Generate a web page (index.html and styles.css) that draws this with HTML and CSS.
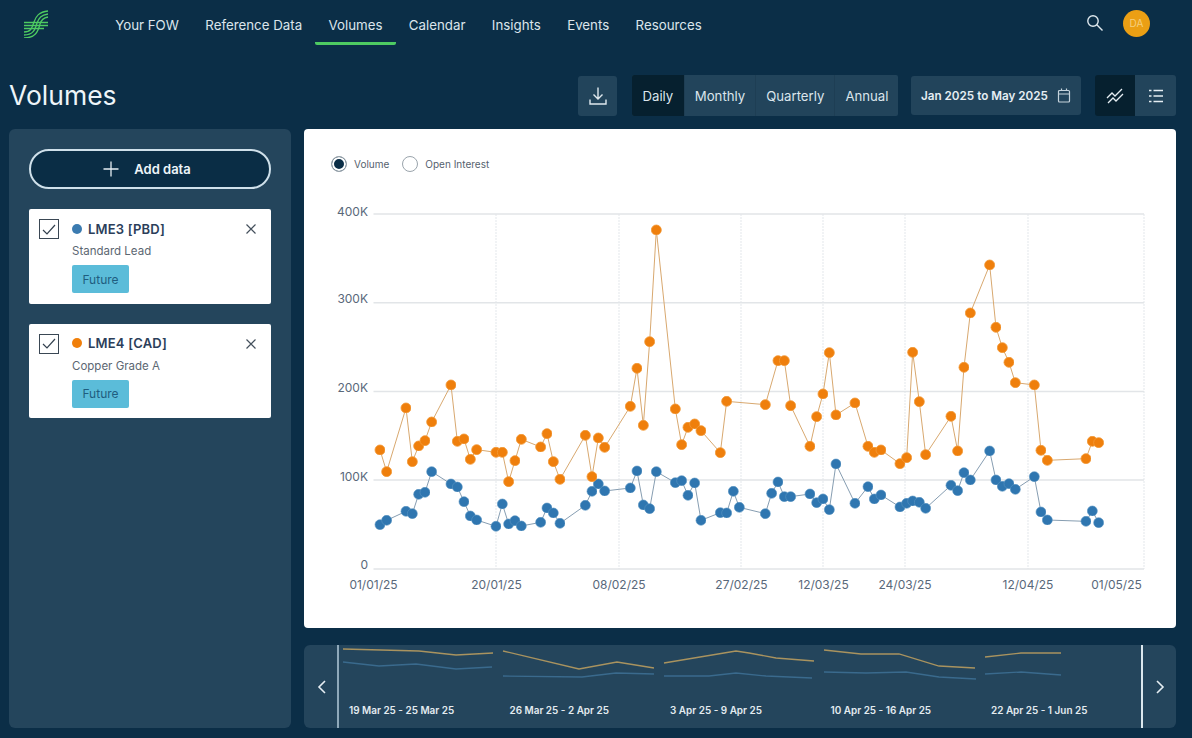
FILE: index.html
```html
<!DOCTYPE html>
<html lang="en">
<head>
<meta charset="utf-8">
<title>Volumes</title>
<link rel="stylesheet" href="styles.css">
</head>
<body>
<header class="topbar">
  <a class="logo" href="#" aria-label="FOW">
    <svg width="26" height="28" viewBox="0 0 26 28" fill="none" stroke="#4ecb62" stroke-width="1.3">
      <path d="M1 12.5H25M1 15.5H25M1 18.5H21"/>
      <path d="M1 22C8 22 9 18 11 12C13 6 16 2 25 1"/>
      <path d="M1 25C10 25 12 20 14 13C16 8 18 5 25 4"/>
      <path d="M1 28C12 28 15 22 17 14C18 10 20 8 25 7"/>
    </svg>
  </a>
  <nav class="nav">
    <a class="nav-item" href="#">Your FOW</a>
    <a class="nav-item" href="#">Reference Data</a>
    <a class="nav-item is-active" href="#">Volumes</a>
    <a class="nav-item" href="#">Calendar</a>
    <a class="nav-item" href="#">Insights</a>
    <a class="nav-item" href="#">Events</a>
    <a class="nav-item" href="#">Resources</a>
  </nav>
  <div class="top-actions">
    <svg class="search" width="18" height="18" viewBox="0 0 18 18" fill="none" stroke="#dfe8ee" stroke-width="1.4">
      <circle cx="7" cy="7" r="5.2"/><path d="M10.8 10.8L16.5 16.5"/>
    </svg>
    <span class="avatar">DA</span>
  </div>
</header>

<section class="toolbar">
  <h1 class="page-title">Volumes</h1>
  <div class="tools">
    <button class="icon-btn download" aria-label="Download">
      <svg width="20" height="20" viewBox="0 0 20 20" fill="none" stroke="#dfe8ee" stroke-width="1.4">
        <path d="M10 1.5V13M5.5 8.5L10 13L14.5 8.5M2 13.5V18H18V13.5"/>
      </svg>
    </button>
    <div class="segmented">
      <button class="seg is-on">Daily</button>
      <button class="seg">Monthly</button>
      <button class="seg">Quarterly</button>
      <button class="seg">Annual</button>
    </div>
    <button class="date-btn">
      <span>Jan 2025 to May 2025</span>
      <svg class="date-icon" width="14" height="15" viewBox="0 0 14 15" fill="none" stroke="#c6d3dc" stroke-width="1.2">
        <rect x="1.5" y="2.5" width="11" height="11.5" rx="1"/><path d="M1.5 6H12.5M4.5 .5V3M9.5 .5V3"/>
      </svg>
    </button>
    <div class="view-toggle">
      <button class="icon-btn is-on" aria-label="Chart view">
        <svg width="18" height="16" viewBox="0 0 18 16" fill="none" stroke="#e6eef3" stroke-width="1.3">
          <path d="M1 10L6 5L9 8L16 1M2 15L7 10L10 13L17 6"/>
        </svg>
      </button>
      <button class="icon-btn" aria-label="List view">
        <svg width="14" height="14" viewBox="0 0 14 14" fill="none" stroke="#e6eef3" stroke-width="1.5">
          <path d="M4.500 1.500H14M4.500 7H14M4.500 12.500H14M0 1.500H2.500M0 7H2.500M0 12.500H2.500"/>
        </svg>
      </button>
    </div>
  </div>
</section>

<main class="workspace">
  <aside class="side-panel">
    <button class="add-data">
      <svg width="16" height="16" viewBox="0 0 16 16" fill="none" stroke="#e6eef3" stroke-width="1.3"><path d="M8 .5V15.500M.5 8H15.500"/></svg>
      <span>Add data</span>
    </button>
    <article class="series-card">
      <span class="check"><svg width="14" height="11" viewBox="0 0 14 11" fill="none" stroke="#33414f" stroke-width="1.2"><path d="M1 6L5 10L13 1"/></svg></span>
      <div class="series-body">
        <div class="series-title"><i class="dot dot-blue"></i>LME3 [PBD]</div>
        <div class="series-sub">Standard Lead</div>
        <span class="badge">Future</span>
      </div>
      <svg class="close" width="10" height="10" viewBox="0 0 10 10" fill="none" stroke="#44505c" stroke-width="1.2"><path d="M.5 .5L9.500 9.500M9.500 .5L.5 9.500"/></svg>
    </article>
    <article class="series-card">
      <span class="check"><svg width="14" height="11" viewBox="0 0 14 11" fill="none" stroke="#33414f" stroke-width="1.2"><path d="M1 6L5 10L13 1"/></svg></span>
      <div class="series-body">
        <div class="series-title"><i class="dot dot-orange"></i>LME4 [CAD]</div>
        <div class="series-sub">Copper Grade A</div>
        <span class="badge">Future</span>
      </div>
      <svg class="close" width="10" height="10" viewBox="0 0 10 10" fill="none" stroke="#44505c" stroke-width="1.2"><path d="M.5 .5L9.500 9.500M9.500 .5L.5 9.500"/></svg>
    </article>
  </aside>

  <div class="content">
    <section class="chart-card">
      <div class="legend">
        <span class="radio is-on"></span><span class="radio-label">Volume</span>
        <span class="radio"></span><span class="radio-label">Open Interest</span>
      </div>
      <svg class="chart" viewBox="304 180 872 448" width="872" height="448">
        <defs>
          <marker id="dot-o" viewBox="0 0 11 11" refX="5.500" refY="5.500" markerWidth="11" markerHeight="11"><circle cx="5.500" cy="5.500" r="5" fill="#ef7f0c" stroke="#f39a3a" stroke-width=".8"/></marker>
          <marker id="dot-b" viewBox="0 0 11 11" refX="5.500" refY="5.500" markerWidth="11" markerHeight="11"><circle cx="5.500" cy="5.500" r="5" fill="#2f76b0" stroke="#5b95c2" stroke-width=".6"/></marker>
        </defs>
        <g class="grid-v">
          <path d="M496 214V569M619 214V569M741 214V569M823 214V569M905 214V569M1028 214V569M1144 214V569"/>
        </g>
        <g class="grid-h">
          <path d="M373.500 214H1144M373.500 302.700H1144M373.500 391.500H1144M373.500 480H1144M373.500 569H1144"/>
        </g>
        <g class="y-labels">
          <text x="368" y="216">400K</text>
          <text x="368" y="303">300K</text>
          <text x="368" y="392">200K</text>
          <text x="368" y="481">100K</text>
          <text x="368" y="569">0</text>
        </g>
        <g class="x-labels">
          <text x="373.500" y="589">01/01/25</text>
          <text x="496.500" y="589">20/01/25</text>
          <text x="619" y="589">08/02/25</text>
          <text x="741.500" y="589">27/02/25</text>
          <text x="823.500" y="589">12/03/25</text>
          <text x="905" y="589">24/03/25</text>
          <text x="1028" y="589">12/04/25</text>
          <text x="1116.500" y="589">01/05/25</text>
        </g>
        <g transform="translate(320 200) scale(.33333)">
          <polyline class="line line-b" points="180,974 200,961 258,934 277,941 296,883 315,877 335,815 393,852 412,861 432,905 451,948 470,960 528,979 547,912 566,972 585,962 604,978 662,967 681,924 700,939 720,970 796,916 816,874 835,852 854,873 931,864 951,813 970,915 989,926 1009,815 1066,848 1085,842 1104,886 1124,849 1143,961 1201,938 1220,939 1240,874 1258,922 1336,941 1355,880 1374,846 1393,890 1412,890 1470,882 1490,908 1509,897 1528,929 1548,792 1605,910 1644,860 1663,897 1683,885 1740,921 1760,910 1778,903 1798,907 1817,925 1893,856 1913,872 1932,818 1951,840 2009,753 2028,840 2047,859 2067,851 2086,868 2143,830 2163,936 2182,960 2298,964 2317,933 2336,968"/>
          <polyline class="line line-o" points="180,750 200,815 258,624 277,785 296,738 315,722 335,666 393,555 412,724 432,717 451,778 470,749 528,757 547,757 566,845 585,782 604,718 662,741 681,701 700,785 720,838 796,706 816,830 835,714 854,742 931,619 951,505 970,676 989,425 1009,90 1066,627 1085,734 1104,682 1124,672 1143,692 1201,758 1220,604 1336,614 1374,482 1393,482 1412,617 1470,739 1490,650 1509,582 1528,458 1548,645 1605,609 1644,739 1663,757 1683,750 1740,791 1760,773 1778,457 1798,605 1817,764 1893,649 1913,753 1932,502 1951,339 2009,195 2028,382 2047,443 2067,487 2086,548 2143,555 2163,751 2182,781 2298,776 2317,724 2336,728"/>
        </g>
      </svg>
    </section>

    <section class="timeline">
      <button class="tl-nav" aria-label="Previous">
        <svg width="9" height="14" viewBox="0 0 9 14" fill="none" stroke="#e6eef3" stroke-width="1.600"><path d="M8 1L2 7L8 13"/></svg>
      </button>
      <div class="tl-track">
        <svg class="sparks" viewBox="340 645 802 45" width="802" height="45">
          <g class="spark-o">
            <polyline points="344,649 420,651 457,655 494,653"/>
            <polyline points="504,651 580,669 618,662 655,668"/>
            <polyline points="665,663 737,651 750,653 777,658 815,661"/>
            <polyline points="825,650 862,654 900,654 940,666 976,668"/>
            <polyline points="986,657 1022,653 1062,653"/>
          </g>
          <g class="spark-b">
            <polyline points="344,662 380,666 417,664 457,669 493,667"/>
            <polyline points="504,676 583,677 617,673 655,674"/>
            <polyline points="665,676 710,676 737,673 767,676 813,678"/>
            <polyline points="825,672 867,673 907,672 940,677 977,679"/>
            <polyline points="986,674 1022,672 1062,675"/>
          </g>
        </svg>
        <div class="tl-labels">
          <span>19 Mar 25 - 25 Mar 25</span>
          <span>26 Mar 25 - 2 Apr 25</span>
          <span>3 Apr 25 - 9 Apr 25</span>
          <span>10 Apr 25 - 16 Apr 25</span>
          <span>22 Apr 25 - 1 Jun 25</span>
        </div>
      </div>
      <button class="tl-nav" aria-label="Next">
        <svg width="9" height="14" viewBox="0 0 9 14" fill="none" stroke="#e6eef3" stroke-width="1.600"><path d="M1 1L7 7L1 13"/></svg>
      </button>
    </section>
  </div>
</main>
</body>
</html>
```
FILE: styles.css
```css
* { box-sizing: border-box; }
html, body { margin: 0; height: 100%; }
body {
  width: 1192px;
  height: 738px;
  overflow: hidden;
  background: #0b2e47;
  color: #e6eef3;
  font-family: Inter, "Noto Sans", sans-serif;
}
button { font: inherit; color: inherit; border: 0; background: none; padding: 0; }

/* top bar */
.topbar { display: flex; height: 50px; padding: 0 42px 0 23px; }
.logo { display: block; width: 79px; padding-top: 10px; }
.nav { display: flex; height: 45px; }
.nav-item {
  display: flex;
  align-items: center;
  padding: 7px 13.200px 0;
  border-bottom: 3px solid transparent;
  color: #dbe5ec;
  font-size: 13.300px;
  text-decoration: none;
}
.nav-item.is-active { border-bottom-color: #4ecb62; border-radius: 0 0 2px 2px; }
.top-actions { margin-left: auto; display: flex; align-items: center; gap: 19px; height: 46px; }
.avatar {
  width: 27px; height: 27px; border-radius: 50%;
  background: #eb9f14; color: #f6cf7d;
  display: flex; align-items: center; justify-content: center;
  font-size: 10px;
}

/* toolbar */
.toolbar { display: flex; align-items: center; height: 41px; margin-top: 25px; padding: 0 16px 0 9px; }
.page-title { margin: 0; padding-bottom: 2px; font-size: 26.500px; font-weight: 400; color: #eef5f9; }
.tools { margin-left: auto; display: flex; align-items: center; }
.icon-btn { width: 40px; height: 41px; display: flex; align-items: center; justify-content: center; background: #22445b; }
.icon-btn.is-on { background: #06202f; }
.download { width: 39px; height: 40px; border-radius: 3px; margin-right: 15px; }
.segmented { display: flex; width: 266px; height: 41px; margin-right: 13px; background: #22445b; border-radius: 2px; }
.seg { padding: 0 10px; font-size: 13.200px; color: #dbe5ec; border-left: 1px solid #1e3e54; }
.seg:first-child { border-left: 0; padding: 0 10.500px; }
.seg.is-on { background: #06202f; border-radius: 2px 0 0 2px; }
.date-btn {
  display: flex; align-items: center; gap: 9px;
  width: 170px; height: 39px; padding: 0 10px;
  background: #22445b; border-radius: 3px;
  font-size: 11.700px; font-weight: 600; color: #e6eef3;
  margin-right: 14px;
  white-space: nowrap;
}
.date-icon { flex: none; }
.view-toggle { display: flex; border-radius: 3px; overflow: hidden; }
.view-toggle .icon-btn:last-child { width: 41px; }

/* layout */
.workspace { display: grid; grid-template-columns: 282px 872px; gap: 13px; margin-top: 13px; padding-left: 9px; }
.side-panel {
  height: 599px; padding: 20px;
  background: #24455c; border-radius: 6px;
  display: flex; flex-direction: column; gap: 20px;
}
.add-data {
  height: 40px; padding-right: 6px; display: flex; align-items: center; justify-content: center; gap: 15px;
  border: 2px solid #cfe0ea; border-radius: 20px;
  background: #0a2d45;
  font-size: 13px; font-weight: 600; color: #eef5f9;
}
.series-card {
  display: flex; height: 94.500px; padding: 10px 15px 0 10px;
  background: #fff; border-radius: 2px; color: #2c3e5a;
}
.check {
  width: 20px; height: 20px; flex: none; margin-right: 13px;
  border: 1px solid #3a4754;
  display: flex; align-items: center; justify-content: center;
}
.series-body { flex: 1; }
.series-title { display: flex; align-items: center; height: 19px; font-size: 13px; font-weight: 600; letter-spacing: .2px; }
.dot { width: 10px; height: 10px; border-radius: 50%; margin-right: 6px; }
.dot-blue { background: #3b7bb0; }
.dot-orange { background: #f07f0a; }
.series-sub { margin-top: 5px; font-size: 11.500px; line-height: 16px; color: #5c6772; }
.badge {
  display: inline-flex; align-items: center; justify-content: center;
  width: 57px; height: 28px; margin-top: 6px;
  background: #5bbcd9; border-radius: 2px;
  color: #1f5d80; font-size: 12px;
}
.close { margin-top: 5px; }

/* chart */
.content { display: flex; flex-direction: column; gap: 17px; }
.chart-card { height: 499px; background: #fff; border-radius: 4px; padding-top: 26px; }
.legend { display: flex; align-items: center; height: 18px; margin: 0 0 7px 27px; }
.radio {
  width: 16px; height: 16px; border-radius: 50%;
  border: 1px solid #9aa4ac; background: #fff; flex: none;
}
.radio.is-on { box-shadow: inset 0 0 0 2px #fff; background: #0b2e47; }
.radio-label { margin: 0 13px 0 7px; font-size: 10px; color: #56626e; }
.chart { display: block; }
.grid-v path { fill: none; stroke: #eceef1; stroke-width: 1.400; stroke-dasharray: 2 1; }
.grid-h path { fill: none; stroke: #e2e5e8; stroke-width: 1.400; }
.y-labels text { font-size: 12px; fill: #59687a; text-anchor: end; }
.x-labels text { font-size: 12px; fill: #59687a; text-anchor: middle; }
.line { fill: none; stroke-width: 3; }
.line-o { stroke: #d8a86e; marker-start: url(#dot-o); marker-mid: url(#dot-o); marker-end: url(#dot-o); }
.line-b { stroke: #869db1; marker-start: url(#dot-b); marker-mid: url(#dot-b); marker-end: url(#dot-b); }

/* timeline */
.timeline { display: flex; height: 83px; background: #24455c; border-radius: 6px; }
.tl-nav { width: 35px; padding-left: 2px; display: flex; align-items: center; justify-content: center; }
.tl-track { width: 802px; border-left: 2px solid #8fa9ba; border-right: 2px solid #dbe7ee; box-sizing: content-box; }
.sparks { display: block; }
.sparks polyline { fill: none; stroke-width: 1.300; }
.spark-o polyline { stroke: #a9935f; }
.spark-b polyline { stroke: #3a6a8d; }
.tl-labels { display: grid; grid-template-columns: repeat(5, 160.500px); margin-top: 14px; padding-left: 10px; }
.tl-labels span { font-size: 9.950px; font-weight: 600; color: #e3ebf0; white-space: nowrap; }
```
